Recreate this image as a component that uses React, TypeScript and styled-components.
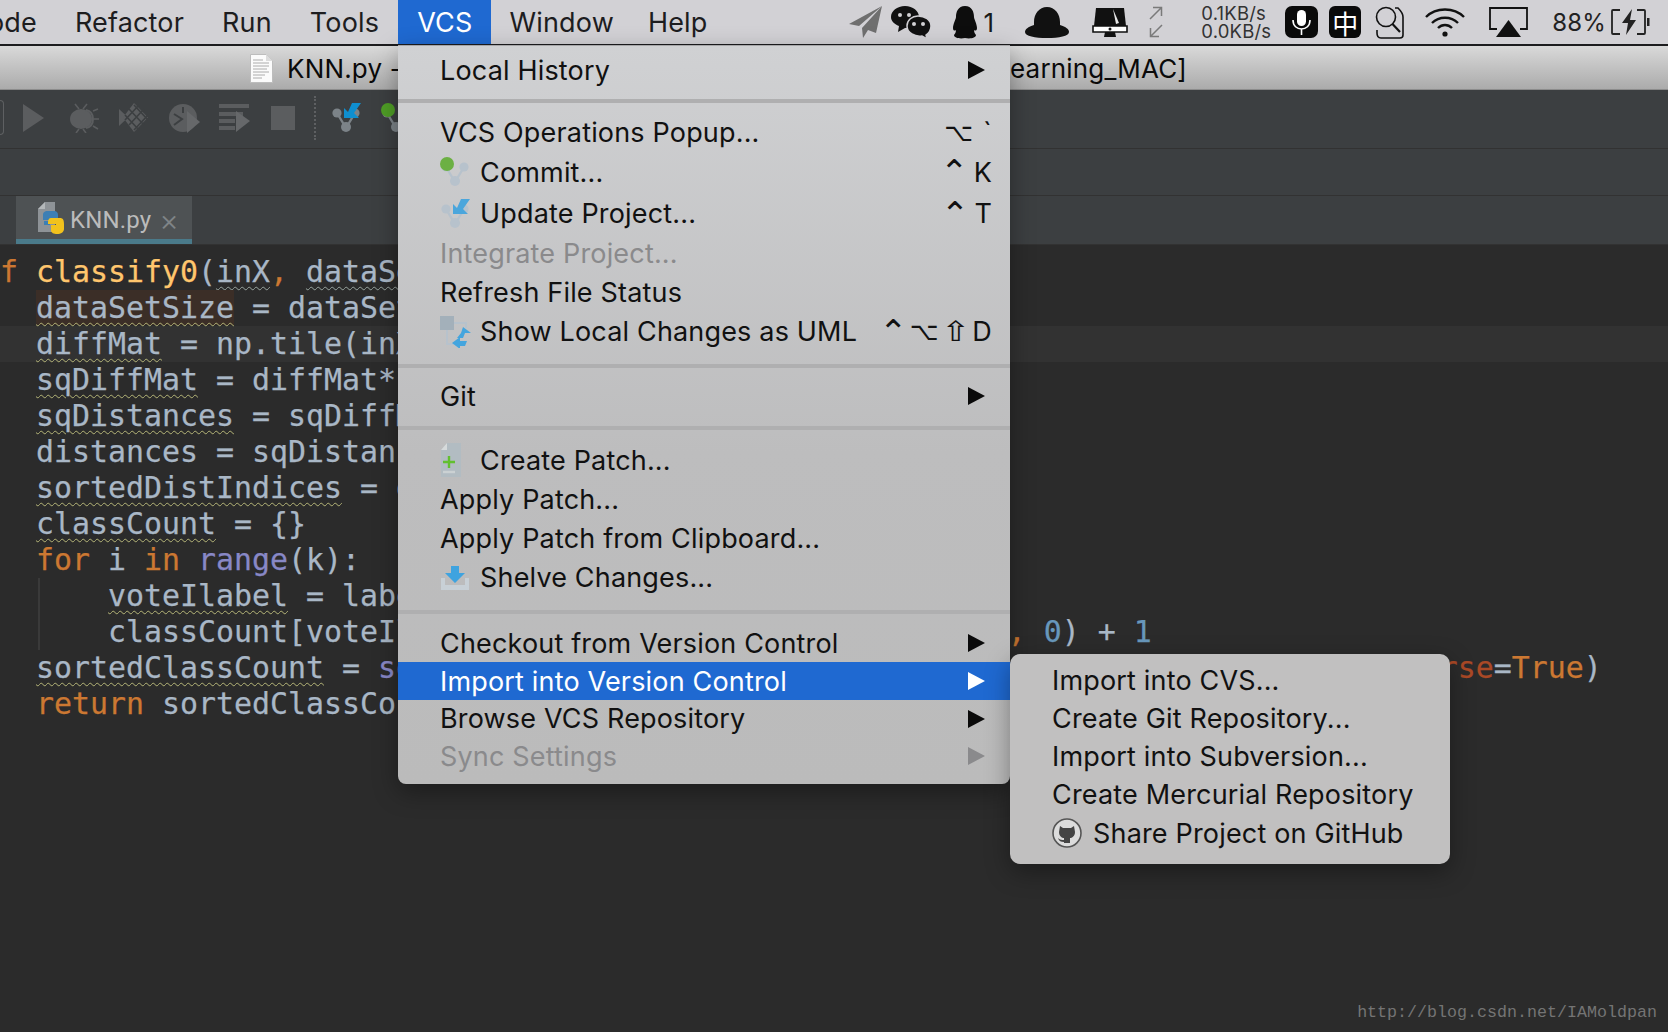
import * as React from 'react';
import styled, { createGlobalStyle } from 'styled-components';

const GlobalStyle = createGlobalStyle`
  html, body {
    margin: 0;
    background: #2b2b2b;
  }
`;

type Token = string | [string, 'k' | 'f' | 'b' | 'n' | 'a' | 'w' | 'g' | 'h'];

const codeTop: Token[][] = [
  [['def', 'k'], ' ', ['classify0', 'f'], '(', ['inX', 'g'], [',', 'k'], ' ', ['dataSet', 'g'], [',', 'k'], ' labels', [',', 'k'], ' k):'],
  ['    ', ['dataSetSize', 'h'], ' = dataSet.shape[', ['0', 'n'], ']'],
  ['    ', ['diffMat', 'w'], ' = np.tile(inX', [',', 'k'], ' (dataSetSize', [',', 'k'], ' ', ['1', 'n'], ')) - dataSet'],
  ['    ', ['sqDiffMat', 'w'], ' = diffMat**', ['2', 'n']],
  ['    ', ['sqDistances', 'w'], ' = sqDiffMat.sum(', ['axis', 'a'], '=', ['1', 'n'], ')'],
  ['    distances = sqDistances**', ['0.5', 'n']],
  ['    ', ['sortedDistIndices', 'w'], ' = distances.argsort()'],
  ['    ', ['classCount', 'w'], ' = {}'],
  ['    ', ['for', 'k'], ' i ', ['in', 'k'], ' ', ['range', 'b'], '(k):'],
];

const codeLoop: Token[][] = [
  ['  ', ['voteIlabel', 'w'], ' = labels[sortedDistIndices[i]]'],
  ['  classCount[voteIlabel] = classCount.get(voteIlabel', [',', 'k'], ' ', ['0', 'n'], ') + ', ['1', 'n']],
];

const codeBottom: Token[][] = [
  ['    ', ['sortedClassCount', 'w'], ' = ', ['sorted', 'b'], '(classCount.items()', [',', 'k'], ' ', ['key', 'a'], '=operator.itemgetter(', ['1', 'n'], ')', [',', 'k'], ' ', ['reverse', 'a'], '=', ['True', 'k'], ')'],
  ['    ', ['return', 'k'], ' sortedClassCount[', ['0', 'n'], '][', ['0', 'n'], ']'],
];

const Branch = ({ faded }: { faded?: boolean }) => (
  <g stroke={faded ? '#b7c2cc' : '#7c8388'} fill={faded ? '#b7c2cc' : '#7c8388'}>
    <path d="M6 10 L15 25 L24 10" strokeWidth="2.4" fill="none" />
    <circle cx="6" cy="10" r="4.6" stroke="none" />
    <circle cx="24" cy="10" r="4.6" stroke="none" />
    <circle cx="15" cy="24" r="5" stroke="none" />
  </g>
);

const CommitIcon = ({ faded }: { faded?: boolean }) => (
  <svg width="30" height="30" viewBox="0 0 30 30">
    <Branch faded={faded} />
    <circle cx="7" cy="7" r="7" fill={faded ? '#6cb043' : '#4f9e26'} />
  </svg>
);

const UpdateIcon = ({ faded }: { faded?: boolean }) => (
  <svg width="30" height="30" viewBox="0 0 30 30">
    <Branch faded={faded} />
    <path d="M13 5 V15 H28 L23 10 L30 0 H21 L17 9 Z" fill={faded ? '#4ba6dc' : '#0f8fcf'} />
  </svg>
);

const UmlIcon = () => (
  <svg width="32" height="32" viewBox="0 0 32 32">
    <rect x="0" y="0" width="14" height="14" fill="#a3b0ba" />
    <path d="M7 14 V28 H15 M14 7 H26 V12" stroke="#b7c2cc" strokeWidth="2" fill="none" />
    <path d="M23 11 L31 17 H25 L23 22 H17 L21 17 Z" fill="#44a5de" />
    <path d="M12 27 L20 21 V25 H27 L25 30 H20 V33 Z" fill="#44a5de" />
  </svg>
);

const PatchIcon = () => (
  <svg width="22" height="36" viewBox="0 0 22 36">
    <path d="M7 0 H21 V34 H1 V7 Z" fill="#b2bcc2" />
    <path d="M7 0 V7 H1 Z" fill="#d6dadb" />
    <path d="M3 19 H15 M9 13 V25" stroke="#62c02f" strokeWidth="2.4" />
    <path d="M3 29 H15" stroke="#cbd1d3" strokeWidth="2.4" />
  </svg>
);

const ShelveIcon = () => (
  <svg width="30" height="24" viewBox="0 0 30 24">
    <path d="M1 12 H5 V19 H25 V12 H29 V24 H1 Z" fill="#c8d0d6" />
    <path d="M11 0 H19 V7 H25 L15 17 L5 7 H11 Z" fill="#3fa3df" />
  </svg>
);

const GithubIcon = () => (
  <svg width="30" height="30" viewBox="0 0 30 30">
    <circle cx="15" cy="15" r="14" fill="#dcdcdc" stroke="#555" strokeWidth="1.6" />
    <path d="M8 8 L11 10 H19 L22 8 L23 14 C23 18 20 20 18 20 V25 H12 V20 C10 20 7 18 7 14 Z" fill="#444" />
    <path d="M6 20 C8 22 10 22 12 22 V24 C9 24 7 23 6 20 Z" fill="#444" />
  </svg>
);

const PythonIcon = () => (
  <svg width="30" height="32" viewBox="0 0 30 32">
    <path d="M2 7 L9 0 H19 V30 H2 Z" fill="#8e9397" />
    <path d="M2 7 H9 V0 Z" fill="#b4b8ba" />
    <path d="M12 9 C8 9 7 11 7 13 V18 H13 V19 H8 V23 H14 V20 H19 C22 20 22 17 22 15 V13 C22 11 21 9 18 9 Z" fill="#3d7fb4" />
    <path d="M21 32 C25 32 28 30 28 27 V22 C28 18 27 16 24 16 H15 C13 16 12 18 12 20 V22 H20 V23 H15 V28 C15 31 18 32 21 32 Z" fill="#f2c21d" />
  </svg>
);

const PlaneIcon = () => (
  <svg width="33" height="32" viewBox="0 0 33 32">
    <path d="M33 0 L0 18 L10 20 L33 0 L13 22 L14 32 L19 24 L27 27 Z" fill="#6f6f6f" />
  </svg>
);

const WechatIcon = () => (
  <svg width="42" height="33" viewBox="0 0 42 33">
    <path d="M15 0 C23 0 29 5 29 11 C29 17 23 22 15 22 L8 26 L9 20 C4 18 1 15 1 11 C1 5 7 0 15 0 Z" fill="#111" />
    <path d="M28 10 C35 10 41 14 41 20 C41 24 39 27 36 29 L37 33 L32 30 C25 31 17 27 17 20 C17 14 22 10 28 10 Z" fill="#111" stroke="#d2d1d5" strokeWidth="1.5" />
    <circle cx="10" cy="9" r="2" fill="#d2d1d5" />
    <circle cx="19" cy="9" r="2" fill="#d2d1d5" />
    <circle cx="24" cy="18" r="2" fill="#d2d1d5" />
    <circle cx="33" cy="18" r="2" fill="#d2d1d5" />
  </svg>
);

const PenguinIcon = () => (
  <svg width="30" height="33" viewBox="0 0 30 33">
    <path d="M15 0 C22 0 24 6 24 11 C24 13 27 18 27 22 C27 25 25 25 24 24 C24 26 25 28 26 29 C26 32 20 33 15 32 C10 33 4 32 4 29 C5 28 6 26 6 24 C5 25 3 25 3 22 C3 18 6 13 6 11 C6 6 8 0 15 0 Z" fill="#0d0d0d" />
  </svg>
);

const CapIcon = () => (
  <svg width="44" height="31" viewBox="0 0 44 31">
    <path d="M22 0 C30 0 35 7 35 15 V18 C41 20 44 22 44 25 C44 29 34 31 22 31 C10 31 0 29 0 25 C0 22 3 20 9 18 V15 C9 7 14 0 22 0 Z" fill="#111" />
  </svg>
);

const MonitorIcon = () => (
  <svg width="36" height="29" viewBox="0 0 36 29">
    <path d="M4 0 H32 L34 18 H2 Z" fill="#111" />
    <path d="M21 1 L27 15 L24 16 Z" fill="#e8e8e8" />
    <path d="M1 18 H35 V24 H1 Z" fill="#fff" stroke="#111" strokeWidth="1.6" />
    <circle cx="18" cy="21" r="1.5" fill="#111" />
    <path d="M13 24 H23 L24 29 H12 Z" fill="#111" />
  </svg>
);

const TransferIcon = () => (
  <svg width="14" height="32" viewBox="0 0 14 32" fill="none" stroke="#7a7a7a" strokeWidth="1.5">
    <path d="M1 13 L12 2 M4 1.5 H12.5 V10" />
    <path d="M13 19 L2 30 M10 30.5 H1.5 V22" />
  </svg>
);

const MicIcon = () => (
  <svg width="33" height="32" viewBox="0 0 33 32">
    <rect width="33" height="32" rx="7" fill="#0a0a0a" />
    <rect x="12" y="4" width="9" height="16" rx="4.5" fill="#fff" />
    <path d="M8 14 C8 20 12 23 16.5 23 C21 23 25 20 25 14 M16.5 23 V29" stroke="#fff" strokeWidth="1.6" fill="none" />
  </svg>
);

const SearchDocIcon = () => (
  <svg width="32" height="34" viewBox="0 0 32 34" fill="none" stroke="#111" strokeWidth="1.6">
    <circle cx="13" cy="12" r="9.5" />
    <path d="M19.5 19 L27 27" strokeWidth="2.2" />
    <path d="M22 3 H25 C28 6 30 8 30 12 V30 C30 32 29 33 27 33 H8 C5 33 4 31 4 28 V25" />
  </svg>
);

const WifiIcon = () => (
  <svg width="42" height="30" viewBox="0 0 42 30" fill="none" stroke="#111" strokeWidth="2.4">
    <path d="M2 10 C12 0 30 0 40 10" />
    <path d="M8 16 C15 9 27 9 34 16" />
    <path d="M14 21 C18 17 24 17 28 21" />
    <circle cx="21" cy="27" r="2.6" fill="#111" stroke="none" />
  </svg>
);

const AirplayIcon = () => (
  <svg width="39" height="30" viewBox="0 0 39 30">
    <path d="M8 22 H1 V1 H38 V22 H31" fill="none" stroke="#111" strokeWidth="1.8" />
    <path d="M19.500 13 L32 30 H7 Z" fill="#111" />
  </svg>
);

const BatteryIcon = () => (
  <svg width="39" height="26" viewBox="0 0 39 26" fill="none" stroke="#222" strokeWidth="1.8">
    <path d="M9 1 H2 C1.500 1 1 1.500 1 2 V24 C1 24.500 1.500 25 2 25 H9" />
    <path d="M26 1 H33 C33.500 1 34 1.500 34 2 V24 C34 24.500 33.500 25 33 25 H26" />
    <path d="M21 0 L11 14 H17 L15 26 L25 11 H19 Z" fill="#222" stroke="none" />
    <rect x="36" y="9" width="2.500" height="8" fill="#222" stroke="none" />
  </svg>
);

const ToolPlay = () => (
  <svg width="21" height="28" viewBox="0 0 21 28"><path d="M0 0 L21 14 L0 28 Z" fill="#5b5d5f" /></svg>
);

const ToolBug = () => (
  <svg width="30" height="30" viewBox="0 0 30 30" fill="none" stroke="#5b5d5f" strokeWidth="1.6">
    <ellipse cx="12" cy="16" rx="11" ry="10" fill="#5b5d5f" stroke="none" />
    <path d="M17 7 C22 8 24 12 24 16 C24 20 22 24 17 25" strokeWidth="2" />
    <path d="M6 1 L10 6 M18 1 L14 6 M24 8 L29 6 M25 16 H30 M24 23 L29 26 M7 30 L10 26 M17 30 L14 26" />
  </svg>
);

const ToolCoverage = () => (
  <svg width="29" height="29" viewBox="0 0 29 29">
    <path d="M0 6 L9 14.500 L0 23 Z" fill="#5b5d5f" />
    <path d="M15 0 L29 14.500 L15 29 L4 14.500 Z" fill="#5b5d5f" />
    <path d="M10 6 L25 22 M15 2 L29 17 M6 12 L20 27 M25 6 L10 22 M20 2 L6 17 M29 12 L15 27" stroke="#3c3f41" strokeWidth="1.6" />
  </svg>
);

const ToolProfile = () => (
  <svg width="31" height="30" viewBox="0 0 31 30">
    <circle cx="14" cy="15" r="14" fill="#5b5d5f" />
    <path d="M5 11 L13 16 L5 22" stroke="#3c3f41" strokeWidth="2" fill="none" />
    <path d="M14 4 V10" stroke="#3c3f41" strokeWidth="2" />
    <path d="M18 8 L31 19 L18 30 Z" fill="#66686a" />
  </svg>
);

const ToolRunList = () => (
  <svg width="31" height="28" viewBox="0 0 31 28">
    <path d="M0 0 H30 V4 H0 Z M0 8 H24 V12 H0 Z M0 15 H16 V19 H0 Z M0 22 H16 V26 H0 Z" fill="#5b5d5f" />
    <path d="M17 7 L31 17 L17 28 Z" fill="#66686a" />
  </svg>
);

const ToolStop = () => (
  <svg width="24" height="24" viewBox="0 0 24 24"><rect width="24" height="24" fill="#5b5d5f" /></svg>
);

const FileIcon = () => (
  <svg width="23" height="29" viewBox="0 0 23 29">
    <path d="M0.500 0.500 H16 L22.500 7 V28.500 H0.500 Z" fill="#fbfbfb" stroke="#bdbdbd" />
    <path d="M16 0.500 V7 H22.500 Z" fill="#dcdcdc" />
    <path d="M3 6 H13 M3 9 H19 M3 12 H19 M3 15 H17 M3 18 H19 M3 21 H15 M3 24 H12" stroke="#9a9a9a" strokeWidth="0.8" />
  </svg>
);

type MenuEntry =
  | { sep: true; mt: number; mb: number }
  | {
      sep?: false;
      label: string;
      h: number;
      icon?: React.ReactNode;
      shortcut?: string[];
      arrow?: boolean;
      disabled?: boolean;
      active?: boolean;
    };

const vcsMenu: MenuEntry[] = [
  { label: 'Local History', h: 36, arrow: true },
  { sep: true, mt: 11, mb: 11 },
  { label: 'VCS Operations Popup...', h: 37, shortcut: ['⌥', '`'] },
  { label: 'Commit...', h: 42, icon: <CommitIcon faded />, shortcut: ['⌃', 'K'] },
  { label: 'Update Project...', h: 41, icon: <UpdateIcon faded />, shortcut: ['⌃', 'T'] },
  { label: 'Integrate Project...', h: 39, disabled: true },
  { label: 'Refresh File Status', h: 38 },
  { label: 'Show Local Changes as UML', h: 41, icon: <UmlIcon />, shortcut: ['⌃', '⌥', '⇧', 'D'] },
  { sep: true, mt: 12, mb: 10 },
  { label: 'Git', h: 36, arrow: true },
  { sep: true, mt: 12, mb: 11 },
  { label: 'Create Patch...', h: 39, icon: <PatchIcon /> },
  { label: 'Apply Patch...', h: 39 },
  { label: 'Apply Patch from Clipboard...', h: 38 },
  { label: 'Shelve Changes...', h: 41, icon: <ShelveIcon /> },
  { sep: true, mt: 12, mb: 10 },
  { label: 'Checkout from Version Control', h: 38, arrow: true },
  { label: 'Import into Version Control', h: 38, arrow: true, active: true },
  { label: 'Browse VCS Repository', h: 37, arrow: true },
  { label: 'Sync Settings', h: 38, arrow: true, disabled: true },
];

const renderTokens = (tokens: Token[]) =>
  tokens.map((t, i) =>
    typeof t === 'string' ? (
      <React.Fragment key={i}>{t}</React.Fragment>
    ) : (
      <Tok key={i} $kind={t[1]}>
        {t[0]}
      </Tok>
    ),
  );

const App = () => (
  <Page>
    <GlobalStyle />
    <MenuBar>
      <MenuLeft>
        <BarItem $pad={19}>Code</BarItem>
        <BarItem $pad={19}>Refactor</BarItem>
        <BarItem $pad={19}>Run</BarItem>
        <BarItem $pad={19}>Tools</BarItem>
        <BarItem $pad={19} $active>
          VCS
        </BarItem>
        <BarItem $pad={18}>Window</BarItem>
        <BarItem $pad={16}>Help</BarItem>
      </MenuLeft>
      <Status>
        <StatusSlot $left={0}><PlaneIcon /></StatusSlot>
        <StatusSlot $left={8}><WechatIcon /></StatusSlot>
        <StatusSlot $left={18}><PenguinIcon /></StatusSlot>
        <StatusCount>1</StatusCount>
        <StatusSlot $left={31}><CapIcon /></StatusSlot>
        <StatusSlot $left={23}><MonitorIcon /></StatusSlot>
        <StatusSlot $left={21}><TransferIcon /></StatusSlot>
        <Speed>
          <span>0.1KB/s</span>
          <span>0.0KB/s</span>
        </Speed>
        <StatusSlot $left={14}><MicIcon /></StatusSlot>
        <ImeBadge>中</ImeBadge>
        <StatusSlot $left={12}><SearchDocIcon /></StatusSlot>
        <StatusSlot $left={19}><WifiIcon /></StatusSlot>
        <StatusSlot $left={23}><AirplayIcon /></StatusSlot>
        <BatteryText>88%</BatteryText>
        <StatusSlot $left={5}><BatteryIcon /></StatusSlot>
      </Status>
    </MenuBar>

    <TitleBar>
      <TitleLeft>
        <FileIcon />
        <span>KNN.py - Machine_Learning_MAC</span>
      </TitleLeft>
      <TitleRight>[~/Learning_MAC]</TitleRight>
    </TitleBar>

    <Toolbar>
      <ConfigEdge />
      <ToolSlot $left={19}><ToolPlay /></ToolSlot>
      <ToolSlot $left={25}><ToolBug /></ToolSlot>
      <ToolSlot $left={20}><ToolCoverage /></ToolSlot>
      <ToolSlot $left={21}><ToolProfile /></ToolSlot>
      <ToolSlot $left={19}><ToolRunList /></ToolSlot>
      <ToolSlot $left={21}><ToolStop /></ToolSlot>
      <ToolDivider />
      <ToolSlot $left={15}><UpdateIcon /></ToolSlot>
      <ToolSlot $left={20}><CommitIcon /></ToolSlot>
    </Toolbar>

    <NavBar />

    <TabStrip>
      <Tab>
        <PythonIcon />
        <TabName>KNN.py</TabName>
        <TabClose>×</TabClose>
      </Tab>
    </TabStrip>

    <Editor>
      {codeTop.map((line, i) => (
        <CodeLine key={i} $current={i === 2}>
          {renderTokens(line)}
        </CodeLine>
      ))}
      <LoopBlock>
        {codeLoop.map((line, i) => (
          <CodeLine key={i}>{renderTokens(line)}</CodeLine>
        ))}
      </LoopBlock>
      {codeBottom.map((line, i) => (
        <CodeLine key={i}>{renderTokens(line)}</CodeLine>
      ))}
    </Editor>

    <VcsMenu>
      {vcsMenu.map((item, i) =>
        item.sep ? (
          <Separator key={i} $mt={item.mt} $mb={item.mb} />
        ) : (
          <Row key={i} $h={item.h} $active={item.active} $disabled={item.disabled}>
            {item.icon && <RowIcon>{item.icon}</RowIcon>}
            <span>{item.label}</span>
            {item.shortcut && (
              <Shortcut>
                {item.shortcut.map((key) => (
                  <ShortcutKey key={key} $key={key}>
                    {key}
                  </ShortcutKey>
                ))}
              </Shortcut>
            )}
            {item.arrow && <Arrow $active={item.active} $disabled={item.disabled} />}
          </Row>
        ),
      )}
    </VcsMenu>

    <SubMenu>
      <SubRow $h={38}>Import into CVS...</SubRow>
      <SubRow $h={38}>Create Git Repository...</SubRow>
      <SubRow $h={38}>Import into Subversion...</SubRow>
      <SubRow $h={38}>Create Mercurial Repository</SubRow>
      <SubRow $h={40}>
        <GithubIcon />
        <GithubLabel>Share Project on GitHub</GithubLabel>
      </SubRow>
    </SubMenu>

    <Watermark>http://blog.csdn.net/IAMoldpan</Watermark>
  </Page>
);

export default App;

const uiFont = `Inter, "DejaVu Sans", sans-serif`;

const Page = styled.div`
  position: relative;
  width: 1668px;
  height: 1032px;
  overflow: hidden;
  display: flex;
  flex-direction: column;
  background: #2b2b2b;
  font-family: ${uiFont};
  letter-spacing: 0.17px;
`;

const MenuBar = styled.div`
  flex: none;
  height: 44px;
  display: flex;
  justify-content: space-between;
  background: #d2d1d5;
  border-bottom: 2px solid #1c1c1e;
  overflow: hidden;
`;

const MenuLeft = styled.div`
  display: flex;
  margin-left: -51px;
`;

const BarItem = styled.div<{ $pad: number; $active?: boolean }>`
  display: flex;
  align-items: center;
  padding: 0 ${(p) => p.$pad}px;
  font-size: 27px;
  color: ${(p) => (p.$active ? '#fff' : '#1d1d1f')};
  background: ${(p) => (p.$active ? '#1f69d1' : 'transparent')};
`;

const Status = styled.div`
  display: flex;
  align-items: center;
  padding-right: 18px;
  color: #1a1a1a;
`;

const StatusSlot = styled.div<{ $left: number }>`
  display: flex;
  margin-left: ${(p) => p.$left}px;
`;

const StatusCount = styled.span`
  margin-left: 4px;
  font-size: 26px;
`;

const Speed = styled.div`
  display: flex;
  flex-direction: column;
  margin-left: 38px;
  font-size: 18.500px;
  line-height: 18px;
  color: #333;
`;

const ImeBadge = styled.div`
  width: 32px;
  height: 32px;
  margin-left: 11px;
  display: flex;
  align-items: center;
  justify-content: center;
  border-radius: 6px;
  background: #0a0a0a;
  color: #fff;
  font: 26px "Noto Sans CJK SC", sans-serif;
`;

const BatteryText = styled.span`
  margin-left: 24px;
  font-size: 24px;
  color: #222;
`;

const TitleBar = styled.div`
  flex: none;
  height: 41px;
  display: flex;
  align-items: center;
  justify-content: space-between;
  padding: 2px 481px 0 250px;
  background: linear-gradient(#d9d9d9, #ababab);
  border-bottom: 1px solid #8c8c8c;
  font-size: 26px;
  color: #0a0a0a;
  overflow: hidden;
`;

const TitleLeft = styled.div`
  display: flex;
  align-items: center;
  gap: 14px;
`;

const TitleRight = styled.div``;

const Toolbar = styled.div`
  flex: none;
  height: 55px;
  padding-bottom: 3px;
  display: flex;
  align-items: center;
  background: #3c3f41;
  border-bottom: 1px solid #323232;
`;

const ConfigEdge = styled.div`
  width: 3px;
  height: 33px;
  border: 1px solid #5e6062;
  border-left: none;
  border-radius: 0 4px 4px 0;
`;

const ToolSlot = styled.div<{ $left: number }>`
  display: flex;
  margin-left: ${(p) => p.$left}px;
`;

const ToolDivider = styled.div`
  height: 44px;
  margin-left: 19px;
  border-left: 2px dotted #5e6062;
`;

const NavBar = styled.div`
  flex: none;
  height: 46px;
  background: #3c3f41;
  border-bottom: 1px solid #323232;
`;

const TabStrip = styled.div`
  flex: none;
  height: 48px;
  display: flex;
  padding-left: 16px;
  background: #3c3f41;
  border-bottom: 1px solid #323232;
`;

const Tab = styled.div`
  width: 176px;
  display: flex;
  align-items: center;
  padding-left: 20px;
  box-sizing: border-box;
  background: #4e5254;
  border-bottom: 5px solid #4a7a8a;
`;

const TabName = styled.span`
  margin-left: 4px;
  padding-top: 5px;
  font-family: Roboto, sans-serif;
  font-size: 24px;
  color: #bbbbbb;
`;

const TabClose = styled.span`
  margin-left: 8px;
  padding-top: 5px;
  font-size: 30px;
  font-weight: 300;
  color: #7f8487;
`;

const Editor = styled.div`
  flex: 1;
  padding-top: 9px;
  background: #2b2b2b;
  font-family: "DejaVu Sans Mono", monospace;
  font-size: 29.900px;
  letter-spacing: 0;
  color: #a9b7c6;
  -webkit-text-stroke: 0.25px currentColor;
  overflow: hidden;
`;

const CodeLine = styled.div<{ $current?: boolean }>`
  height: 36px;
  line-height: 36px;
  white-space: pre;
  margin-left: -36px;
  background: ${(p) => (p.$current ? '#323232' : 'transparent')};
`;

const LoopBlock = styled.div`
  margin-left: 38px;
  padding-left: 32px;
  border-left: 2px solid #3a3a3a;

  ${CodeLine} {
    margin-left: 0;
  }
`;

const tokenColors: Record<string, string> = {
  k: '#cc7832',
  f: '#ffc66d',
  b: '#8888c6',
  n: '#6897bb',
  a: '#aa4926',
};

const Tok = styled.span<{ $kind: string }>`
  color: ${(p) => tokenColors[p.$kind] ?? 'inherit'};
  background: ${(p) => (p.$kind === 'h' ? '#3b2e27' : 'transparent')};
  ${(p) =>
    ['w', 'g', 'h'].includes(p.$kind)
      ? `
    text-decoration: underline wavy ${p.$kind === 'g' ? '#98a59f' : '#b5b577'} 1px;
    text-underline-offset: 4px;
  `
      : ''}
`;

const VcsMenu = styled.div`
  position: absolute;
  top: 45px;
  left: 398px;
  width: 612px;
  height: 739px;
  box-sizing: border-box;
  padding-top: 6px;
  background: linear-gradient(#d0d1d3, #bdbdbe 55%, #bbbbbb);
  border-top: 1px solid #a6a6a8;
  border-radius: 0 0 8px 8px;
  box-shadow: 0 8px 24px rgba(0, 0, 0, 0.35);
  font-size: 27px;
`;

const Separator = styled.div<{ $mt: number; $mb: number }>`
  height: 4px;
  margin: ${(p) => p.$mt}px 0 ${(p) => p.$mb}px;
  background: #afafb0;
`;

const Row = styled.div<{ $h: number; $active?: boolean; $disabled?: boolean }>`
  height: ${(p) => p.$h}px;
  box-sizing: border-box;
  display: flex;
  align-items: center;
  padding: 0 25px 0 42px;
  color: ${(p) => (p.$active ? '#fff' : p.$disabled ? '#8a8a8c' : '#111')};
  background: ${(p) => (p.$active ? '#1f69d1' : 'transparent')};
`;

const RowIcon = styled.div`
  width: 40px;
  flex: none;
  display: flex;
`;

const Shortcut = styled.span`
  margin-left: auto;
  margin-right: -7px;
  display: flex;
  align-items: center;
  gap: 2px;
`;

const keySizes: Record<string, number> = { '⌃': 34, '⌥': 25, '⇧': 28 };

const keyMargins: Record<string, string> = { '⇧': '0 3px', '`': '0 0 0 8px', K: '0 0 0 3px', T: '0 0 0 3px' };

const ShortcutKey = styled.span<{ $key: string }>`
  display: inline-block;
  font-size: ${(p) => keySizes[p.$key] ?? 27}px;
  font-family: ${(p) => (keySizes[p.$key] ? '"DejaVu Sans", sans-serif' : 'inherit')};
  transform: ${(p) => (p.$key === '⇧' ? 'scaleX(1.25)' : 'none')};
  margin: ${(p) => keyMargins[p.$key] ?? '0'};
`;

const Arrow = styled.span<{ $active?: boolean; $disabled?: boolean }>`
  margin-left: auto;
  width: 0;
  height: 0;
  border-style: solid;
  border-width: 9.5px 0 9.5px 17px;
  border-color: transparent transparent transparent
    ${(p) => (p.$active ? '#fff' : p.$disabled ? '#8a8a8c' : '#0a0a0a')};
`;

const SubMenu = styled.div`
  position: absolute;
  top: 654px;
  left: 1010px;
  width: 440px;
  height: 210px;
  box-sizing: border-box;
  padding: 7px 0 0 42px;
  background: #c1c0c0;
  border-radius: 10px;
  box-shadow: 0 8px 24px rgba(0, 0, 0, 0.35);
  font-size: 27px;
  color: #111;
`;

const SubRow = styled.div<{ $h: number }>`
  height: ${(p) => p.$h}px;
  display: flex;
  align-items: center;
`;

const GithubLabel = styled.span`
  margin-left: 11px;
`;

const Watermark = styled.div`
  position: absolute;
  right: 11px;
  bottom: 10px;
  font-family: "Liberation Mono", monospace;
  font-size: 16.670px;
  letter-spacing: 0;
  color: #747474;
`;
